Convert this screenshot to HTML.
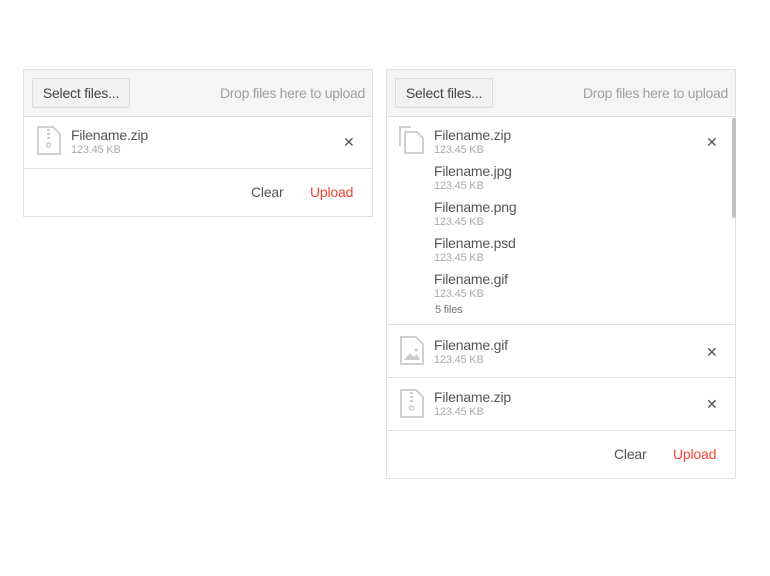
<!DOCTYPE html>
<html><head><style>
*{box-sizing:border-box;margin:0;padding:0}
body{width:770px;height:576px;background:#fff;font-family:"Liberation Sans",sans-serif;position:relative;overflow:hidden}
.p{position:absolute;border:1px solid #e0e0e0;background:#fff}
.hd{position:absolute;left:0;right:0;top:0;height:47px;background:#f5f5f5;border-bottom:1px solid #e0e0e0}
.btn{position:absolute;left:8px;top:8px;width:98px;height:30px;border:1px solid #dcdcdc;background:#f2f2f2;border-radius:2px;font-size:14px;color:#444;line-height:28px;text-align:center;letter-spacing:-0.2px}
.drop{position:absolute;right:7px;top:15px;font-size:14px;color:#a0a0a0;letter-spacing:-0.3px}
.row{position:absolute;left:0;right:0;border-bottom:1px solid #e0e0e0}
.n{position:absolute;font-size:14px;color:#555;letter-spacing:-0.2px}
.s{position:absolute;font-size:11px;color:#aaa;letter-spacing:-0.2px}
.x{position:absolute;font-size:14px;color:#555}
.ft{position:absolute;font-size:14px;letter-spacing:-0.2px}
svg{position:absolute}
</style></head><body>
<div class="p" style="left:23px;top:69px;width:350px;height:148px">
 <div class="hd"><div class="btn">Select files...</div><div class="drop">Drop files here to upload</div></div>
 <div class="row" style="top:47px;height:52px">
  <svg style="left:13px;top:9px" width="24" height="29" viewBox="0 0 24 29"><path d="M1 1h15l7 7v20H1z" fill="none" stroke="#d0d0d0" stroke-width="2"/><path d="M10 3h3v2h-3zM10 7h3v2h-3zM10 11h3v2h-3z" fill="#ccc"/><circle cx="11.5" cy="19" r="2" fill="none" stroke="#ccc" stroke-width="1.5"/></svg>
  <div class="n" style="left:47px;top:10px">Filename.zip</div>
  <div class="s" style="left:47px;top:27px">123.45 KB</div>
  <div class="x" style="left:319px;top:17px">✕</div>
 </div>
 <div class="ft" style="left:227px;top:114px;color:#555">Clear</div>
 <div class="ft" style="left:286px;top:114px;color:#f44336">Upload</div>
</div>

<div class="p" style="left:386px;top:69px;width:350px;height:410px">
 <div class="hd"><div class="btn">Select files...</div><div class="drop">Drop files here to upload</div></div>
 <div style="position:absolute;left:345px;top:48px;width:4px;height:100px;background:#c2c2c2;border-radius:2px"></div>
 <div class="row" style="top:47px;height:208px">
  <svg style="left:10px;top:9px" width="28" height="28" viewBox="0 0 28 28"><path d="M3 20V1h11" fill="none" stroke="#d0d0d0" stroke-width="2"/><path d="M8 6h12l6 6v15H8z" fill="none" stroke="#d0d0d0" stroke-width="2"/></svg>
  <div class="n" style="left:47px;top:10px">Filename.zip</div><div class="s" style="left:47px;top:27px">123.45 KB</div>
  <div class="n" style="left:47px;top:46px">Filename.jpg</div><div class="s" style="left:47px;top:63px">123.45 KB</div>
  <div class="n" style="left:47px;top:82px">Filename.png</div><div class="s" style="left:47px;top:99px">123.45 KB</div>
  <div class="n" style="left:47px;top:118px">Filename.psd</div><div class="s" style="left:47px;top:135px">123.45 KB</div>
  <div class="n" style="left:47px;top:154px">Filename.gif</div><div class="s" style="left:47px;top:171px">123.45 KB</div>
  <div class="s" style="left:48px;top:187px;color:#777">5 files</div>
  <div class="x" style="left:319px;top:17px">✕</div>
 </div>
 <div class="row" style="top:255px;height:53px">
  <svg style="left:13px;top:11px" width="24" height="29" viewBox="0 0 24 29"><path d="M1 1h15l7 7v20H1z" fill="none" stroke="#d0d0d0" stroke-width="2"/><path d="M4 24l6-7 4 4 3-3 3 6z" fill="#ccc"/><circle cx="16" cy="14" r="1.5" fill="#ccc"/></svg>
  <div class="n" style="left:47px;top:12px">Filename.gif</div><div class="s" style="left:47px;top:29px">123.45 KB</div>
  <div class="x" style="left:319px;top:19px">✕</div>
 </div>
 <div class="row" style="top:308px;height:53px">
  <svg style="left:13px;top:11px" width="24" height="29" viewBox="0 0 24 29"><path d="M1 1h15l7 7v20H1z" fill="none" stroke="#d0d0d0" stroke-width="2"/><path d="M10 3h3v2h-3zM10 7h3v2h-3zM10 11h3v2h-3z" fill="#ccc"/><circle cx="11.5" cy="19" r="2" fill="none" stroke="#ccc" stroke-width="1.5"/></svg>
  <div class="n" style="left:47px;top:11px">Filename.zip</div><div class="s" style="left:47px;top:28px">123.45 KB</div>
  <div class="x" style="left:319px;top:18px">✕</div>
 </div>
 <div class="ft" style="left:227px;top:376px;color:#555">Clear</div>
 <div class="ft" style="left:286px;top:376px;color:#f44336">Upload</div>
</div>
</body></html>
